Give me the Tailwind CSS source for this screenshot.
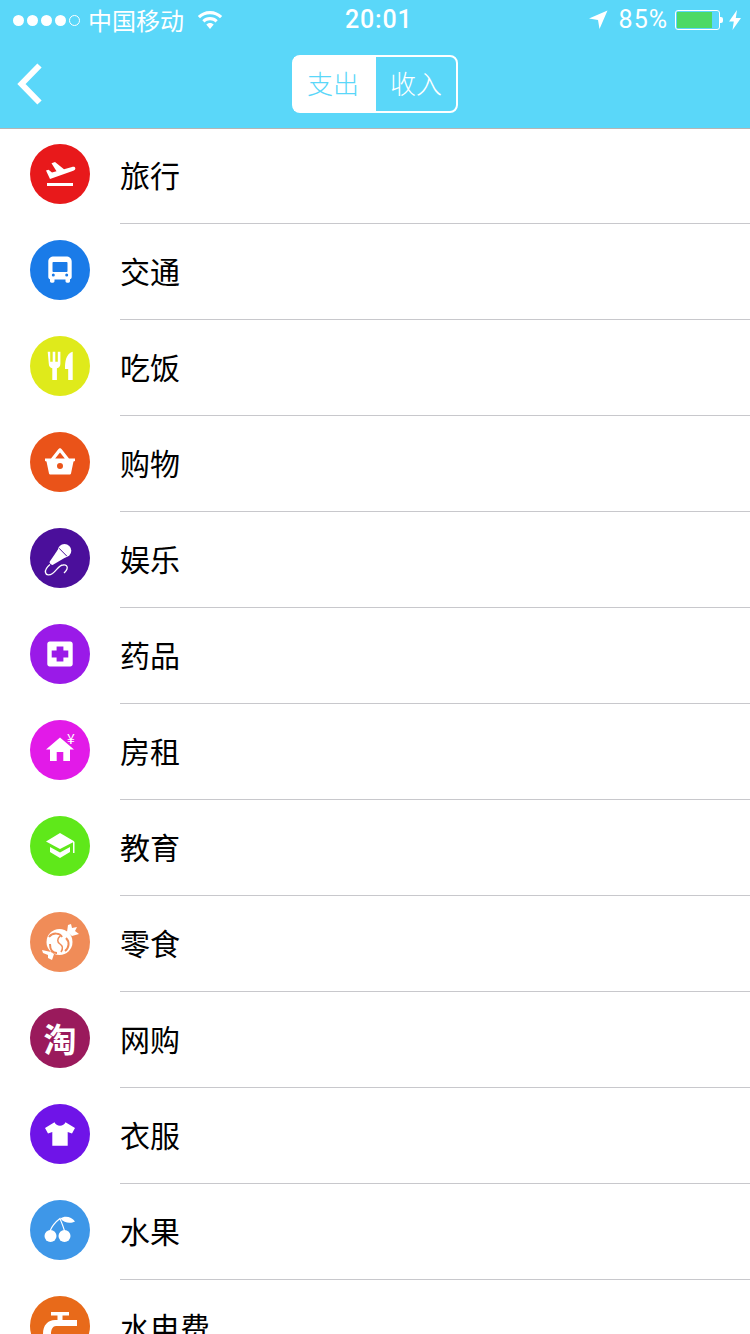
<!doctype html>
<html lang="zh">
<head>
    <meta charset="utf-8"/>
    <meta content="width=device-width, initial-scale=1.0" name="viewport"/>
    <title>记账</title>
    <script src="https://cdn.jsdelivr.net/npm/@tailwindcss/browser@4"></script>
</head>
<body class="bg-white w-[750px] h-[1334px] overflow-hidden font-['Noto_Sans_CJK_SC',sans-serif] text-black">
    <!-- Header -->
    <header class="bg-[#5ad7f9] h-[129px] border-b border-[#b5b5b5] text-white">
        <div class="h-[40px] relative flex items-center justify-between pl-[13px] pr-[9px]">
            <div class="flex items-center">
                <div class="flex gap-[3px]">
                    <span class="w-[11px] h-[11px] rounded-full bg-white"></span>
                    <span class="w-[11px] h-[11px] rounded-full bg-white"></span>
                    <span class="w-[11px] h-[11px] rounded-full bg-white"></span>
                    <span class="w-[11px] h-[11px] rounded-full bg-white"></span>
                    <span class="w-[11px] h-[11px] rounded-full border border-white"></span>
                </div>
                <span class="ml-[8px] text-[24px] leading-[40px]">中国移动</span>
                <svg class="ml-[13px] mb-[1px]" width="26" height="20" viewBox="0 0 26 20" fill="white">
                    <path d="M13 1C8 1 4 3 .8 6l2.200 2.300C5.600 5.800 9 4.300 13 4.300s7.400 1.500 10 4L25.200 6C22 3 18 1 13 1z"/>
                    <path d="M13 7c-3 0-5.700 1.200-7.700 3.200l2.200 2.300C9 11.100 10.900 10.300 13 10.300s4 .8 5.500 2.200l2.200-2.300C18.700 8.200 16 7 13 7z"/>
                    <path d="M13 13c-1.500 0-2.800.6-3.700 1.500L13 19l3.700-4.500C15.800 13.600 14.500 13 13 13z"/>
                </svg>
            </div>
            <span class="absolute left-[345px] top-0 text-[25px] leading-[40px] font-['Roboto',sans-serif] font-medium tracking-[0.8px]">20:01</span>
            <div class="flex items-center">
                <svg width="20" height="20" viewBox="0 0 20 20" fill="white"><path d="M19.500.5 1 8.500l9 1.500 1.500 9z"/></svg>
                <span class="ml-[11px] text-[25px] leading-[40px] font-['Roboto',sans-serif] tracking-[1px]">85%</span>
                <div class="ml-[7px] w-[45px] h-[20px] border border-white rounded-[3px] p-[1px]">
                    <div class="h-full w-[35px] bg-[#4cd964]"></div>
                </div>
                <span class="w-[3px] h-[6px] bg-white rounded-r-[2px]"></span>
                <svg class="ml-[6px]" width="12" height="20" viewBox="0 0 12 20" fill="white"><path d="M8 0 0 11.500h4.800L3.500 20 12 8H6.800z"/></svg>
            </div>
        </div>
        <div class="h-[88px] relative flex items-center justify-center">
            <svg class="absolute left-[16px] top-[23px]" width="28" height="42" viewBox="0 0 28 42" fill="none" stroke="white" stroke-width="6"><path d="M23.500 2.500 5.500 21l18 18.500"/></svg>
            <div class="flex w-[166px] h-[58px] mb-[1px] border-2 border-white rounded-[8px] text-[26px] font-light">
                <div class="w-[82px] pr-[4px] pb-[2px] bg-white text-[#5ad7f9] flex items-center justify-center">支出</div>
                <div class="flex-1 pb-[2px] flex items-center justify-center">收入</div>
            </div>
        </div>
    </header>

    <!-- Category list -->
    <ul class="-mt-[1px]">
        <li class="h-[96px] flex pl-[30px]">
            <div class="w-[60px] h-[60px] mt-[16px] shrink-0 rounded-full bg-[#e8191b]">
                <svg width="60" height="60" viewBox="0 0 60 60" fill="white">
                    <path d="M16 26.500l2.500-.8 3.500 2.800 4.500-1.300-5-8 3.500-1.200 9 7.200 8-2.200c1.700-.5 3-.1 3.300 1.200.3 1.300-.7 2-2 2.500L20 35z"/>
                    <rect x="17" y="39" width="26" height="3"/>
                </svg>
            </div>
            <div class="ml-[30px] flex-1 border-b border-[#c8c8cc] text-[30px] leading-[92px]">旅行</div>
        </li>
        <li class="h-[96px] flex pl-[30px]">
            <div class="w-[60px] h-[60px] mt-[16px] shrink-0 rounded-full bg-[#1a7be8]">
                <svg width="60" height="60" viewBox="0 0 60 60" fill="white">
                    <path fill-rule="evenodd" d="M24 16.500h12c3.500 0 5.700 2 5.700 5V37c0 1.200-.7 2-1.700 2.300V41c0 1-.6 1.700-1.500 1.700H37c-.9 0-1.500-.7-1.500-1.700v-1.500h-11V41c0 1-.6 1.700-1.500 1.700h-1.500c-.9 0-1.500-.7-1.500-1.700v-1.700c-1-.3-1.700-1.100-1.700-2.300V21.500c0-3 2.200-5 5.700-5zM22.500 23v8c0 .6.400 1 1 1h13c.6 0 1-.4 1-1v-8c0-.6-.4-1-1-1h-13c-.6 0-1 .4-1 1zm.8 10.500a1.500 1.500 0 1 0 0 3 1.500 1.500 0 0 0 0-3zm13.400 0a1.500 1.500 0 1 0 0 3 1.500 1.500 0 0 0 0-3z"/>
                </svg>
            </div>
            <div class="ml-[30px] flex-1 border-b border-[#c8c8cc] text-[30px] leading-[92px]">交通</div>
        </li>
        <li class="h-[96px] flex pl-[30px]">
            <div class="w-[60px] h-[60px] mt-[16px] shrink-0 rounded-full bg-[#dfea1b]">
                <svg width="60" height="60" viewBox="0 0 60 60" fill="white">
                    <path d="M17.700 15.700h2.500v10h2.500v-10h2.600v10h2.500v-10h2.600v12c0 2.500-1.400 4-3.500 4.500V44h-4.600V32.200c-2.100-.5-3.500-2-3.500-4.500z"/>
                    <path d="M42.500 15.700c.1 0 .2.1.2.3v28h-4.500V33H35c0-8 1-15 7.500-17.300z"/>
                </svg>
            </div>
            <div class="ml-[30px] flex-1 border-b border-[#c8c8cc] text-[30px] leading-[92px]">吃饭</div>
        </li>
        <li class="h-[96px] flex pl-[30px]">
            <div class="w-[60px] h-[60px] mt-[16px] shrink-0 rounded-full bg-[#ea5319]">
                <svg width="60" height="60" viewBox="0 0 60 60" fill="white">
                    <path fill-rule="evenodd" d="M28.500 17 30 16l1.500 1 7.500 9.500h6V29l-1.500.5-2.500 12c-.2.800-.8 1-1.500 1h-19c-.7 0-1.300-.2-1.500-1l-2.500-12L15 29v-2.500h6zM30 20.500l-4.800 6h9.600zM30 31a3 3 0 1 0 0 6 3 3 0 0 0 0-6z"/>
                </svg>
            </div>
            <div class="ml-[30px] flex-1 border-b border-[#c8c8cc] text-[30px] leading-[92px]">购物</div>
        </li>
        <li class="h-[96px] flex pl-[30px]">
            <div class="w-[60px] h-[60px] mt-[16px] shrink-0 rounded-full bg-[#4b0f9b]">
                <svg width="60" height="60" viewBox="0 0 60 60" fill="none">
                    <circle cx="34.500" cy="22.800" r="6.800" fill="white"/>
                    <path d="M29 20 37 28.500 23 36.800c-.7.400-1.200.3-1.700-.2l-1.300-1.300c-.5-.5-.6-1-.2-1.700z" fill="white"/>
                    <path d="M29 20.200 37 28.300" stroke="#4b0f9b" stroke-width="1"/>
                    <path d="M20 36.500c-3 2.500-5 5.500-4.500 8 .6 3 4 3 7 1 4-3 6.500-8.500 10.500-8.500 3-.5 5 1 4 4-.6 2-2 3-3 4" stroke="white" stroke-width="1.300"/>
                </svg>
            </div>
            <div class="ml-[30px] flex-1 border-b border-[#c8c8cc] text-[30px] leading-[92px]">娱乐</div>
        </li>
        <li class="h-[96px] flex pl-[30px]">
            <div class="w-[60px] h-[60px] mt-[16px] shrink-0 rounded-full bg-[#9a1ae8]">
                <svg width="60" height="60" viewBox="0 0 60 60" fill="white">
                    <path fill-rule="evenodd" d="M19.700 17.500h20.600c1.400 0 2.400 1 2.400 2.400v20.200c0 1.400-1 2.400-2.400 2.400H19.700c-1.400 0-2.400-1-2.400-2.400V19.900c0-1.400 1-2.400 2.400-2.400zm6.900 5v4.100h-4.900v6.800h4.900v4.100h6.800v-4.100h4.900v-6.800h-4.900v-4.100z"/>
                </svg>
            </div>
            <div class="ml-[30px] flex-1 border-b border-[#c8c8cc] text-[30px] leading-[92px]">药品</div>
        </li>
        <li class="h-[96px] flex pl-[30px]">
            <div class="w-[60px] h-[60px] mt-[16px] shrink-0 rounded-full bg-[#e21ae8] relative">
                <svg width="60" height="60" viewBox="0 0 60 60" fill="white">
                    <path d="M30 17.500 44 29.500h-4V41h-6.700v-9h-6.600v9H20V29.500h-4z"/>
                </svg>
                <span class="absolute left-[37px] top-[10px] text-[14px] leading-[16px] text-white">¥</span>
            </div>
            <div class="ml-[30px] flex-1 border-b border-[#c8c8cc] text-[30px] leading-[92px]">房租</div>
        </li>
        <li class="h-[96px] flex pl-[30px]">
            <div class="w-[60px] h-[60px] mt-[16px] shrink-0 rounded-full bg-[#5fe81a]">
                <svg width="60" height="60" viewBox="0 0 60 60" fill="white">
                    <path d="M30 17 44.500 25.500 30 33 16 25.500z"/>
                    <path d="M20 31l10 5.500L40 31v5L30 42l-10-6z"/>
                    <rect x="43" y="26" width="1.500" height="11"/>
                </svg>
            </div>
            <div class="ml-[30px] flex-1 border-b border-[#c8c8cc] text-[30px] leading-[92px]">教育</div>
        </li>
        <li class="h-[96px] flex pl-[30px]">
            <div class="w-[60px] h-[60px] mt-[16px] shrink-0 rounded-full bg-[#f08c58]">
                <svg width="60" height="60" viewBox="0 0 60 60" fill="white">
                    <circle cx="29.500" cy="30" r="13"/>
                    <path d="M37 20l1-7 3-1 1 4 5-1-2 4 4 3-7 2zM21 40l-9-2 1 3 5 2 0 3 4 2 2-6z"/>
                    <path d="M19 25c4-5 11-4 13 0M36 26c4 4 3 10-1 13M27 41c-5 0-7-4-7-9" fill="none" stroke="#f08c58" stroke-width="2"/>
                    <path d="M30 24c-3 3-3 6 0 8 3 2 3 5 1 8" fill="none" stroke="#f08c58" stroke-width="1.500"/>
                </svg>
            </div>
            <div class="ml-[30px] flex-1 border-b border-[#c8c8cc] text-[30px] leading-[92px]">零食</div>
        </li>
        <li class="h-[96px] flex pl-[30px]">
            <div class="w-[60px] h-[60px] mt-[16px] shrink-0 rounded-full bg-[#9a1a5c] flex items-center justify-center text-white font-bold text-[33px] leading-[60px]">淘</div>
            <div class="ml-[30px] flex-1 border-b border-[#c8c8cc] text-[30px] leading-[92px]">网购</div>
        </li>
        <li class="h-[96px] flex pl-[30px]">
            <div class="w-[60px] h-[60px] mt-[16px] shrink-0 rounded-full bg-[#6f14e8]">
                <svg width="60" height="60" viewBox="0 0 60 60" fill="white">
                    <path d="M24.500 18.300c1 2 3 3.500 5.500 3.500s4.500-1.500 5.500-3.500L45 24l-3 5.500-4.300-1.500v13.700H22.300V28L18 29.500 15 24z"/>
                </svg>
            </div>
            <div class="ml-[30px] flex-1 border-b border-[#c8c8cc] text-[30px] leading-[92px]">衣服</div>
        </li>
        <li class="h-[96px] flex pl-[30px]">
            <div class="w-[60px] h-[60px] mt-[16px] shrink-0 rounded-full bg-[#3e97e8]">
                <svg width="60" height="60" viewBox="0 0 60 60" fill="white">
                    <circle cx="20.500" cy="36" r="6"/>
                    <circle cx="34.500" cy="36" r="6"/>
                    <path d="M20 31c2-5 6-9.500 10-12.500 1.500 4 3.500 8.500 4.500 12.500" fill="none" stroke="white" stroke-width="1.200"/>
                    <path d="M30.500 18.500c3.500-3 11-2.500 14.500 3-4.500 2.500-11 1.500-14.500-3z"/>
                </svg>
            </div>
            <div class="ml-[30px] flex-1 border-b border-[#c8c8cc] text-[30px] leading-[92px]">水果</div>
        </li>
        <li class="h-[96px] flex pl-[30px]">
            <div class="w-[60px] h-[60px] mt-[16px] shrink-0 rounded-full bg-[#e86a1a]">
                <svg width="60" height="60" viewBox="0 0 60 60" fill="white">
                    <path d="M21 16h18v3.500h-6.500V24H47v6H26c-3 0-5 3-5 8h-8c0-9 5-14 12-14h2.500v-4.500H21z"/>
                </svg>
            </div>
            <div class="ml-[30px] flex-1 border-b border-[#c8c8cc] text-[30px] leading-[92px]">水电费</div>
        </li>
    </ul>
</body>
</html>
